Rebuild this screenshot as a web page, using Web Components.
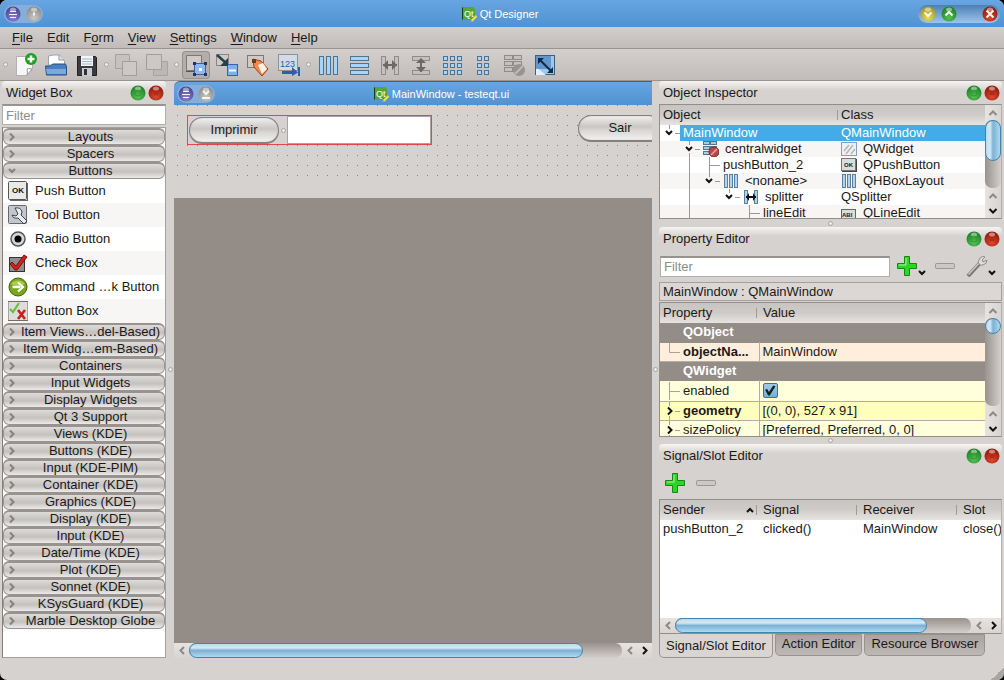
<!DOCTYPE html>
<html lang="en">
<head>
<meta charset="utf-8">
<title>Qt Designer</title>
<style>
  html, body { margin: 0; height: 100%; background: #000; }
  body { font: 13px/16px "Liberation Sans", Arial, sans-serif; color: #1b1918; }
</style>
</head>
<body>
<qd-app></qd-app>
<script>
const svg = (w, h, body, extra = '') =>
  `<svg width="${w}" height="${h}" viewBox="0 0 ${w} ${h}" aria-hidden="true" ${extra}>${body}</svg>`;

const bars = (disabled) => {
  const f = disabled ? '#c4c0bd' : '#a9d4f5', s = disabled ? '#8f8b89' : '#4c7391';
  return { f, s };
};
const bar = (x, y, w, h, f, s) => `<rect x="${x}.5" y="${y}.5" width="${w}" height="${h}" fill="${f}" stroke="${s}"/>`;
const cells = (xs, ys, w, h, f, s) => ys.map(y => xs.map(x => bar(x, y, w, h, f, s)).join('')).join('');
const B = bars(false), D = bars(true);

const ICONS = {
  qt: svg(16, 16, `<path d="M1 1h11l2 2v9l-2 2H1z" fill="#55a636"/><path d="M1 1l1 1v11l-1 1z" fill="#173d10"/><text x="3" y="11" font-size="9" fill="#fff" font-family="Liberation Sans">Qt</text><path d="M10 14l5-5 1 2-5 5z" fill="#f2e34c"/><path d="M9 16l1-2 1 1z" fill="#c9a95f"/>`),
  new: svg(24, 24, `<path d="M3.500 3.500h16v13l-5 6h-11z" fill="#f7f7f7" stroke="#b3b0ae"/><path d="M19 16q-4-1-5 0 1 3 0 6z" fill="#fff" stroke="#999"/><circle cx="18" cy="6" r="6" fill="#1f9e20"/><path d="M18 2.500v7M14.500 6h7" stroke="#fff" stroke-width="2.500"/>`),
  open: svg(24, 24, `<path d="M4.500 12V3l5-1h6l5 6v5z" fill="#fff" stroke="#9ba3ab"/><path d="M15 2v5h5" fill="#dde3e9" stroke="#8f99a5"/><path d="M1.500 13h5l2-2h13l1 3v8h-20z" fill="#4b7fc0" stroke="#244f86"/><path d="M2 16h20v5H3z" fill="#7aa9df"/>`),
  save: svg(24, 24, `<path d="M2.500 3.500h18l1 1v18h-19z" fill="#3c3c40" stroke="#222"/><rect x="6" y="3" width="12" height="10" fill="#f3f6f9"/><path d="M7 6h10M7 8.500h10M7 11h10" stroke="#9fb7cc"/><rect x="7" y="15" width="10" height="8" fill="#c9ccd0"/><rect x="9" y="16" width="3" height="6" fill="#333"/>`),
  front: svg(24, 24, `<path d="M1.500 1.500h14v14h-14z" fill="#c5c1be" stroke="#a5a19e"/><path d="M8.500 8.500h14v14h-14z" fill="#ccc8c5" stroke="#a19d9a"/>`),
  back: svg(24, 24, `<path d="M8.500 8.500h14v14h-14z" fill="#bbb7b4" stroke="#a7a3a0"/><path d="M1.500 1.500h15v15h-15z" fill="#ccc8c5" stroke="#a19d9a"/>`),
  widgets: svg(24, 24, `<path d="M2.500 2.500h15v15h-15z" fill="#cfcac6" stroke="#7b7876"/><path d="M2 18.500h10" stroke="#555"/><rect x="10.500" y="10.500" width="11" height="11" fill="#8fb8f0" stroke="#3c5f9d"/><g fill="#1d3560"><path d="M9 9h3v3H9zM20 9h3v3h-3zM9 20h3v3H9zM20 20h3v3h-3z"/></g><rect x="15" y="15" width="3" height="3" fill="#fff"/>`),
  signals: svg(24, 24, `<rect x="1.500" y="1.500" width="12" height="11" fill="#cfcac6" stroke="#8a8683"/><rect x="12.500" y="11.500" width="10" height="11" fill="#84aeea" stroke="#3562ad"/><path d="M14 17.500h7" stroke="#fff" stroke-width="2"/><path d="M2 2l9 8" stroke="#253f4c" stroke-width="2.500"/><path d="M13 5v8H5z" fill="#253f4c"/>`),
  buddies: svg(24, 24, `<rect x="1.500" y="2.500" width="16" height="12" fill="#cfcac6" stroke="#7b7876"/><path d="M7 6l8 2 7 8-6 7-8-9z" fill="#f08a55" stroke="#a0400d"/><path d="M12 12l5-2 4 6-5 5z" fill="#fff0e6"/><path d="M6 6h4v4H6z" fill="#6b3a20"/>`),
  taborder: svg(24, 24, `<rect x="1.500" y="1.500" width="19" height="16" fill="#d3dbe4" stroke="#8c9299"/><text x="3" y="14" font-size="9" fill="#2f5ea8" font-family="Liberation Sans">123</text><path d="M5 19.500h13" stroke="#2f5ea8" stroke-width="3"/><path d="M15 14l6 5.500-6 3.500zM21 14h2v9h-2z" fill="#2f5ea8"/>`),
  hbox: svg(24, 24, [3, 10, 17].map(x => bar(x, 3, 4, 18, B.f, B.s)).join('')),
  vbox: svg(24, 24, [3, 10, 17].map(y => bar(3, y, 18, 4, B.f, B.s)).join('')),
  hsplit: svg(24, 24, bar(3, 3, 4, 18, D.f, D.s) + bar(16, 3, 4, 18, D.f, D.s) + `<path d="M5 12h14" stroke="#6b6866" stroke-width="2"/><path d="M10 7v10l-5-5zM14 7v10l5-5z" fill="#6b6866"/>`),
  vsplit: svg(24, 24, bar(3, 3, 17, 4, D.f, D.s) + bar(3, 17, 17, 4, D.f, D.s) + `<path d="M12 6v13" stroke="#6b6866" stroke-width="2"/><path d="M7 10h10l-5-5zM7 14h10l-5 5z" fill="#6b6866"/>`),
  grid: svg(24, 24, cells([3, 10, 17], [3, 10, 17], 4, 4, B.f, B.s)),
  form: svg(24, 24, cells([6, 13], [3, 10, 17], 4, 4, B.f, B.s)),
  break: svg(24, 24, cells([2, 11], [2, 8, 14], 8, 4, D.f, D.s) + `<circle cx="17" cy="17" r="6" fill="#979391"/><path d="M13 21l8-8" stroke="#bdb9b6" stroke-width="2"/>`),
  adjust: svg(24, 24, `<rect x="2.500" y="2.500" width="19" height="19" fill="#9cc8ee" stroke="#3c5f80"/><path d="M3 14l10 8H3z" fill="#e3f0fb"/><rect x="3" y="3" width="15" height="13" fill="#5489c4" opacity=".8"/><path d="M7 7l11 11" stroke="#0e2c47" stroke-width="2"/><path d="M5 5h6l-6 6zM20 20h-6l6-6z" fill="#0e2c47"/>`),
  push: svg(20, 20, `<rect x=".5" y=".5" width="18" height="18" rx="1" fill="#e9e9e9" stroke="#555"/><path d="M2 19.500h18M19.500 2v18" stroke="#666"/><text x="4" y="12" font-size="8" font-weight="bold" fill="#111" font-family="Liberation Sans">OK</text>`),
  tool: svg(20, 20, `<rect x=".5" y=".5" width="18" height="18" rx="1" fill="#c3c6cb" stroke="#666a70"/><path d="M7 3q6-1 7 4l-1 3 6 6-3 3-6-6q-5 1-6-3l4 1 2-2z" fill="#e9edf2" stroke="#3c4148"/>`),
  radio: svg(20, 20, `<circle cx="10" cy="10" r="7" fill="#d6d6d6" stroke="#555" stroke-width="1.500"/><circle cx="10" cy="10" r="3.500" fill="#000"/>`),
  check: svg(20, 20, `<rect x="1.500" y="4.500" width="15" height="14" fill="#8d8d8d" stroke="#333"/><path d="M4 9l4 4 8-11 3 2-10 13H7l-5-6z" fill="#d0201c" stroke="#7d0f0c"/>`),
  command: svg(20, 20, `<circle cx="10" cy="10" r="9" fill="#7aa51c" stroke="#40600b"/><path d="M3 7a8 7 0 0 1 14 0q-7 4-14 0z" fill="#a8cc4c"/><path d="M4.500 10h8" stroke="#fff" stroke-width="2.500"/><path d="M10 5.500l5 4.500-5 4.500" fill="none" stroke="#fff" stroke-width="2.200"/>`),
  bbox: svg(20, 20, `<rect x="0" y=".5" width="20" height="19" fill="#dedddc" stroke="#6f6c6a"/><path d="M2 8l3 3 6-9" fill="none" stroke="#67bf3c" stroke-width="2.200"/><path d="M10 9l7 9M17 9l-7 9" stroke="#c8211b" stroke-width="2.600"/>`),
  broken: svg(16, 16, cells([0, 7], [0, 5, 10], 6, 3, '#a9cbe4', '#55758f') + `<circle cx="11" cy="11" r="5" fill="#b8494b" stroke="#7c2528"/><path d="M8 14l6-6" stroke="#e2a6a6" stroke-width="1.500"/>`),
  wid: svg(16, 16, `<rect x=".5" y="1.500" width="15" height="13" fill="#eef1f4" stroke="#7fa0c8"/><path d="M3 10l5-6M5 13l7-9M10 13l4-5" stroke="#b6b8a8" stroke-width="1.500"/>`),
  okbtn: svg(16, 16, `<rect x=".5" y="1.500" width="14" height="12" fill="#dcdcdc" stroke="#777"/><path d="M1 14.500h15M15.500 2v13" stroke="#444"/><text x="3" y="10" font-size="6" font-weight="bold" fill="#222" font-family="Liberation Sans">OK</text>`),
  hb: svg(16, 16, [1, 6, 11].map(x => bar(x, 1, 3, 13, '#b5d4ec', '#58809f')).join('')),
  sp: svg(16, 16, bar(1, 1, 3, 13, '#b5d4ec', '#58809f') + bar(11, 1, 3, 13, '#b5d4ec', '#58809f') + `<path d="M3 8h10" stroke="#111" stroke-width="2"/><path d="M6 4v8L3 8zM10 4v8l3-4z" fill="#111"/>`),
  le: svg(16, 16, `<rect x=".5" y="4.500" width="14" height="9" fill="#dcdcdc" stroke="#666"/><text x="1" y="12" font-size="6" font-weight="bold" fill="#222" font-family="Liberation Sans">ABI</text>`),
  plus: svg(22, 22, `<path d="M8.500 1.500h5v7h7v5h-7v7h-5v-7h-7v-5h7z" fill="#2fd42a" stroke="#128a12"/><path d="M10 3v7H3" fill="none" stroke="#a5f59f"/>`),
  minus: svg(22, 22, `<rect x="1.500" y="8.500" width="19" height="5" rx="1" fill="#cbc8c5" stroke="#9a9795"/>`),
  wrench: svg(22, 22, `<path d="M2 21L14 8" stroke="#777" stroke-width="4"/><path d="M2.500 19.500L14 7" stroke="#c9c9c9" stroke-width="1.500"/><path d="M14 3q3-3 5-1l-3 3 1 2 4-2q0 4-4 5h-3l-2-3z" fill="#dedede" stroke="#8d8d8d"/>`),
  down: svg(10, 8, `<path d="M2 2l3 3 3-3" fill="none" stroke="#111" stroke-width="2"/>`),
  up: svg(10, 8, `<path d="M2 6l3-3 3 3" fill="none" stroke="#111" stroke-width="2"/>`),
};

const BASE = `*{box-sizing:border-box}:host{display:block;min-width:0;min-height:0}
button{font:inherit;color:inherit;border:0;background:none;padding:0;margin:0}svg{display:block;flex:none}
table{border-collapse:collapse;border-spacing:0;width:100%;table-layout:fixed}td,th{padding:0;text-align:left;font-weight:inherit;white-space:nowrap;overflow:hidden}`;

function define(name, render) {
  customElements.define(name, class extends HTMLElement {
    connectedCallback() {
      if (this.shadowRoot) return;
      const t = document.createElement('template');
      const [css, html] = render(this);
      t.innerHTML = `<style>${BASE}${css}</style>${html}`;
      this.attachShadow({ mode: 'open' }).append(t.content.cloneNode(true));
    }
  });
}

/* Round glossy button: colour plus an optional white glyph */
define('qd-orb', el => {
  const tone = {
    green: ['#54c153', '#1f7f28'], red: ['#e0482c', '#8d1a0d'], yellow: ['#e6dc5c', '#a39a2a'],
    violet: ['#8d83cf', '#4b4494'], grey: ['#c9c8c4', '#8d8c89'],
  }[el.getAttribute('tone')];
  const glyph = {
    down: '<path d="M4.500 6.500l3.500 3.500 3.500-3.500"/>', up: '<path d="M4.500 9.500L8 6l3.500 3.500"/>',
    x: '<path d="M4.500 4.500l7 7M11.500 4.500l-7 7"/>', menu: '<path d="M5 5.500h6M4 8.500h8M5 11.500h6" stroke-width="1"/>',
    dot: '<path d="M7 8h2" stroke-width="3"/>', shade: '<path d="M5 5l3 3 3-3M4 12h8"/>',
    ring: '<circle cx="8" cy="8" r="3" stroke="#2f9a38" stroke-width="1"/>', cross: '<path d="M6 6l4 4M10 6l-4 4" stroke="#b02a17"/>',
  }[el.getAttribute('glyph')] || '';
  return [`:host{flex:none}button{display:block;width:16px;height:16px}`,
    `<button type="button" aria-label="${el.getAttribute('label')}">${svg(16, 16,
      `<defs><radialGradient id="g" cx=".5" cy=".75" r=".7"><stop offset="0" stop-color="${tone[0]}"/><stop offset="1" stop-color="${tone[1]}"/></radialGradient></defs><circle cx="8" cy="8" r="7.500" fill="url(#g)"/><ellipse cx="8" cy="3.500" rx="3" ry="2" fill="#fff" opacity=".45"/><g fill="none" stroke="#f4f6f4" stroke-width="2">${glyph}</g>`)}</button>`];
});

define('qd-title', () => [
  `:host{display:grid;grid-template-columns:100px 1fr 100px;align-items:center;height:27px;padding:0 4px;background:linear-gradient(#68a5e2,#5092d1)}
   .pill{display:flex;align-items:center;height:18px;border-radius:9px;width:max-content;padding:0 1px;gap:5px;background:linear-gradient(#4d7fb4,#9cc5ee)}
   .left{background:#86aedb}.right{justify-self:end;padding:0 2px}.gap{width:15px}
   .name{display:flex;gap:3px;align-items:center;justify-content:center;padding-right:5px;color:#fff;font-size:11px}`,
  `<div class="pill left"><qd-orb tone="violet" glyph="menu" label="Window menu"></qd-orb><qd-orb tone="grey" glyph="dot" label="All desktops"></qd-orb></div>
   <div class="name">${ICONS.qt}<span>Qt Designer</span></div>
   <div class="pill right"><qd-orb tone="yellow" glyph="down" label="Minimize"></qd-orb><qd-orb tone="green" glyph="up" label="Maximize"></qd-orb><span class="gap"></span><qd-orb tone="red" glyph="x" label="Close"></qd-orb></div>`]);

define('qd-menu', () => [
  `:host{display:flex;height:22px;padding:0 5px;background:linear-gradient(#d3cfcc,#c1bcb9);border-bottom:1px solid #999492}
   button{padding:0 7px}u{text-underline-offset:2px}`,
  ['<u>F</u>ile', 'Edit', 'F<u>o</u>rm', '<u>V</u>iew', '<u>S</u>ettings', '<u>W</u>indow', '<u>H</u>elp']
    .map(t => `<button type="button">${t}</button>`).join('')]);

define('qd-tools', () => {
  const list = [0, ['new', 'New'], ['open', 'Open'], ['save', 'Save'], 0, ['front', 'Bring to front'], ['back', 'Send to back'], 0,
    ['widgets', 'Edit widgets'], ['signals', 'Edit signals'], ['buddies', 'Edit buddies'], ['taborder', 'Edit tab order'], 0,
    ['hbox', 'Lay out horizontally'], ['vbox', 'Lay out vertically'], ['hsplit', 'Horizontal splitter'], ['vsplit', 'Vertical splitter'],
    ['grid', 'Grid layout'], ['form', 'Form layout'], ['break', 'Break layout'], ['adjust', 'Adjust size']];
  return [`:host{display:flex;align-items:center;gap:3px;height:32px;padding:0 3px;background:linear-gradient(#d3cfcc,#c1bcb9);border-bottom:1px solid #999492}
    i{width:5px;height:5px;border-radius:50%;background:#efedeb;border:1px solid #a8a4a1;flex:none}
    button{width:28px;height:28px;padding:2px;border-radius:4px}.on{background:#b3aeab;box-shadow:inset 0 0 0 1px #96918e}`,
    list.map(i => i ? `<button type="button" aria-label="${i[1]}" ${i[0] === 'widgets' ? 'class="on" aria-pressed="true"' : ''}>${ICONS[i[0]]}</button>` : '<i></i>').join('')];
});

define('qd-grip', el => [
  `:host{display:grid;place-items:center}i{width:5px;height:5px;border-radius:50%;background:#efedeb;border:1px solid #a8a4a1}`, '<i></i>']);

/* Scroll bar; --span sets the length of the handle within the groove */
define('qd-scroll', el => {
  const v = el.hasAttribute('vertical');
  const a = (d, c) => svg(v ? 16 : 12, v ? 12 : 15, `<path d="${d}" fill="none" stroke="${c}" stroke-width="2"/>`);
  const up = v ? 'M4.500 8L8 4.500 11.500 8' : 'M8 4L4.500 7.500 8 11', dn = v ? 'M4.500 4L8 7.500 11.500 4' : 'M4 4l3.500 3.500L4 11';
  return [`:host{display:flex;flex:none;flex-direction:${v ? 'column' : 'row'};align-items:stretch;${v ? 'width:16px' : 'height:15px'};background:linear-gradient(${v ? '90deg' : '180deg'},#e6e3e1,#d8d4d1)}
    .groove{flex:1;min-width:0;min-height:0;display:flex;flex-direction:inherit;border-radius:7px;background:linear-gradient(${v ? '90deg' : '180deg'},#99928e,#d3cfcc)}
    .handle{flex:0 0 var(--span);border:1px solid #4384ad;border-radius:8px;background:linear-gradient(${v ? '90deg' : '180deg'},#b8dcf1 0,#d3e8f4 30%,#7db1d3 50%,#aedaf3 100%)}
    button{display:grid;place-items:center;flex:0 0 15px}`,
    `<button type="button" aria-label="Back">${a(up, '#8d8986')}</button><div class="groove"><div class="handle"></div></div>
     <button type="button" aria-label="Back">${a(up, '#8d8986')}</button><button type="button" aria-label="Forward">${a(dn, '#111')}</button>`];
});

define('qd-dock', el => [
  `:host{display:flex;flex-direction:column}
   header{display:flex;align-items:center;gap:2px;flex:none;height:23px;padding:0 2px 0 4px;border-radius:4px 4px 0 0;background:linear-gradient(#f6f5f4,#d6d2cf 9px)}
   h2{flex:1;margin:0;font:inherit}.body{flex:1;min-height:0;display:flex;flex-direction:column}`,
  `<header><h2>${el.getAttribute('heading')}</h2><qd-orb tone="green" glyph="ring" label="Float"></qd-orb><qd-orb tone="red" glyph="cross" label="Close"></qd-orb></header><div class="body"><slot></slot></div>`]);

define('qd-filter', () => [
  `:host{display:block}input{display:block;width:100%;height:21px;font:inherit;padding:0 3px;border:1px solid #b3afac;border-top:2px solid #98938f;border-radius:0;background:#fff;outline:0}input::placeholder{color:#8f8c8a;opacity:1}`,
  `<input type="text" placeholder="Filter" aria-label="Filter">`]);

define('qd-widgets', () => {
  const head = (t, open) => `<button type="button" class="head" aria-expanded="${!!open}">${svg(12, 12, `<path d="${open ? 'M3 4l3 3 3-3' : 'M4 2.500L7.500 6 4 9.500'}" fill="none" stroke="#85817e" stroke-width="2"/>`)}<span>${t}</span></button>`;
  const item = (i, t) => `<li>${ICONS[i]}<span>${t}</span></li>`;
  return [`:host{display:flex;flex-direction:column;flex:1}
    .frame{flex:1;min-height:0;overflow:hidden;margin-top:2px;background:#fff;border:1px solid #a5a09d;border-left-color:#857f7b}
    .head{display:flex;align-items:center;width:100%;height:17px;padding:0 1px 0 2px;border:1px solid #98938f;border-top-width:2px;border-radius:6px;background:linear-gradient(#dedcda,#c4c1be 55%,#eceae9)}
    .head span{flex:1;text-align:center;white-space:nowrap;line-height:14px}
    ul{list-style:none;margin:0;padding:0}li{display:flex;align-items:center;height:24px;gap:7px;padding-left:5px;white-space:nowrap}li:nth-child(even){background:#f7f6f5}`,
    `<qd-filter></qd-filter><div class="frame">${head('Layouts')}${head('Spacers')}${head('Buttons', 1)}<ul>${item('push', 'Push Button')}${item('tool', 'Tool Button')}${item('radio', 'Radio Button')}${item('check', 'Check Box')}${item('command', 'Command …k Button')}${item('bbox', 'Button Box')}</ul>${
      ['Item Views…del-Based)', 'Item Widg…em-Based)', 'Containers', 'Input Widgets', 'Display Widgets', 'Qt 3 Support', 'Views (KDE)', 'Buttons (KDE)', 'Input (KDE-PIM)', 'Container (KDE)', 'Graphics (KDE)', 'Display (KDE)', 'Input (KDE)', 'Date/Time (KDE)', 'Plot (KDE)', 'Sonnet (KDE)', 'KSysGuard (KDE)', 'Marble Desktop Globe'].map(t => head(t)).join('')}</div>`];
});

define('qd-form', () => [
  `:host{display:flex;flex-direction:column;overflow:hidden}
   .bar{display:grid;grid-template-columns:48px 1fr;align-items:center;flex:none;height:24px;padding-left:3px;border-top:1px solid #41637f;border-radius:6px 0 0;background:linear-gradient(#68a5e2,#5092d1)}
   .pill{display:flex;gap:4px;padding:0 1px;height:18px;align-items:center;width:max-content;border-radius:9px;background:#86aedb}
   .name{display:flex;gap:3px;align-items:center;justify-content:center;padding-left:5px;color:#fff;font-size:11px}
   .canvas{flex:none;height:93px;background:#d6d2cf;overflow:hidden}
   .dots{display:flex;align-items:flex-start;height:71px;padding:10px 0 0 13px;background:conic-gradient(from 270deg at 1px 1px,#86817d 90deg,transparent 0) 3px 0/10px 10px}
   .group{display:flex;align-items:center;flex:none;height:30px;border:1px solid #e2484c;background:#d6d2cf}
   .push{border:1px solid #86817d;border-width:1px 1px 2px;border-radius:13px;height:27px;background:linear-gradient(#f1f0ef 0,#c9c6c3 45%,#d9d6d4 60%,#f3f2f1);box-shadow:inset 0 0 1px #86817d}
   .print{width:90px;margin-left:1px}.exit{width:84px;margin:0 -10px 0 auto;flex:none}
   qd-grip{width:8px}
   input{width:144px;height:28px;font:inherit;padding:0 4px;border:1px solid #a9a4a1;background:#fff;outline:0;border-radius:0}
   .mdi{flex:1;background:#948c87;min-height:0}`,
  `<div class="bar"><div class="pill"><qd-orb tone="violet" glyph="menu" label="Window menu"></qd-orb><qd-orb tone="grey" glyph="shade" label="Shade"></qd-orb></div><div class="name">${ICONS.qt}<span>MainWindow - testeqt.ui</span></div></div>
   <div class="canvas"><div class="dots"><div class="group"><button type="button" class="push print">Imprimir</button><qd-grip></qd-grip><input type="text" aria-label="lineEdit"></div><button type="button" class="push exit">Sair</button></div></div>
   <div class="mdi"></div><qd-scroll style="--span:91%"></qd-scroll>`]);

/* Shared header cells: the divider sits just inside the right edge of each column */
const HEAD = `th{height:20px;background:linear-gradient(#c8c4c1,#cfcbc8 50%,#e6e4e2);padding:0 0 0 4px}
 th:first-child{padding-left:3px}
 th:not(:last-child){background:linear-gradient(#9f9a97,#9f9a97) right 2px center/1px 10px no-repeat,linear-gradient(#c8c4c1,#cfcbc8 50%,#e6e4e2)}
 .box{display:flex;flex:1;min-height:0;overflow:hidden;border:1px solid #938e8a;border-right-color:#b5b0ad;background:#fff}.view{flex:1;min-width:0;overflow:hidden}`;

define('qd-objects', () => {
  const L = 'stroke="#9c9896" fill="none"';
  const arrow = x => `<path d="M${x - 3} 6l3 3 3-3" fill="none" stroke="#111" stroke-width="2"/>`;
  const rows = [
    ['', 'MainWindow', '', 'QMainWindow', svg(20, 16, arrow(9) + `<path d="M9.500 0v4M15 8.500h5" ${L}/>`)],
    ['broken', 'centralwidget', 'wid', 'QWidget', svg(40, 16, arrow(29) + `<path d="M29.500 0v4M29.500 12v4M35 8.500h5" ${L}/>`)],
    ['', 'pushButton_2', 'okbtn', 'QPushButton', svg(60, 16, `<path d="M29.500 0v16M49.500 0v16M49.500 8.500H60" ${L}/>`)],
    ['hb', '&lt;noname&gt;', 'hb', 'QHBoxLayout', svg(60, 16, arrow(49) + `<path d="M29.500 0v16M49.500 0v4M55 8.500h5" ${L}/>`)],
    ['sp', 'splitter', '', 'QSplitter', svg(80, 16, arrow(69) + `<path d="M29.500 0v16M69.500 0v4M75 8.500h5" ${L}/>`)],
    ['', 'lineEdit', 'le', 'QLineEdit', svg(100, 16, `<path d="M29.500 0v16M89.500 0v16M89.500 8.500H100" ${L}/>`)],
  ];
  return [`:host{display:flex;flex:1}${HEAD}th+th{padding-left:1px}td{height:16px}.c{display:flex;align-items:center;height:16px}.c span{padding-left:3px}.c .ic{padding:0 3px}
    td+td .c{padding-left:1px}td+td .c svg{margin-right:3px}td+td .c span{padding-left:0}td+td .c svg+span{padding-left:3px}
    tbody tr:nth-child(even){background:#f7f6f5}.sel td+td,.sel .c span{background:#43ace8;color:#fff}.sel td:first-child span{flex:1}`,
    `<div class="box"><div class="view"><table><colgroup><col style="width:180px"><col></colgroup><thead><tr><th>Object</th><th>Class</th></tr></thead><tbody>${
      rows.map((r, i) => `<tr class="${i ? '' : 'sel'}"><td><div class="c">${r[4]}${r[0] ? `<i class="ic">${ICONS[r[0]]}</i>` : ''}<span>${r[1]}</span></div></td><td><div class="c">${r[2] ? ICONS[r[2]] : ''}<span>${r[3]}</span></div></td></tr>`).join('')
    }</tbody></table></div><qd-scroll vertical style="--span:61%"></qd-scroll></div>`];
});

define('qd-props', () => {
  const line = (d) => svg(20, 18, `<path d="${d}" stroke="#a8a39a" fill="none"/>`);
  const exp = svg(20, 18, `<path d="M9.500 0v4M9.500 14v4M15 9.500h5" stroke="#a8a39a"/><path d="M8 5.500L11.500 9 8 12.500" fill="none" stroke="#111" stroke-width="2"/>`);
  return [`:host{display:flex;flex:1;flex-direction:column}${HEAD}
    .tools{display:flex;align-items:center;height:32px;flex:none;padding:0 5px 0 1px}.tools qd-filter{flex:1;margin-right:6px}.tools button{display:flex;align-items:center}.tools button svg+svg{margin:14px 0 0 -1px}.tools .minus{margin:0 10px 0 7px}
    .path{flex:none;height:19px;line-height:17px;padding-left:3px;border:1px solid #a5a09d;background:#dbd7d4;margin-bottom:1px}
    tbody tr{height:19px;border-bottom:1px solid #b3ae9e}.tall{height:21px!important}td+td{border-left:1px solid #b3ae9e;padding-left:3px}
    .c{display:flex;align-items:center;height:18px;gap:3px}.cat{background:#948c87;color:#fff;font-weight:bold;border-color:#948c87!important}.cat td{padding-left:23px}
    .peach{background:#ffeedc}.pale{background:#ffffdc}.yellow{background:#ffffbc}
    input[type=checkbox]{appearance:none;display:block;width:15px;height:15px;margin:0;border:1px solid #3f7193;border-radius:2px;background:linear-gradient(#9fcbe6,#78afd2)}
    input[type=checkbox]::before{content:"";display:block;height:13px;background:#10222d;clip-path:polygon(12% 45%,28% 38%,42% 62%,75% 12%,92% 18%,48% 88%,36% 88%)}`,
    `<div class="tools"><qd-filter></qd-filter><button type="button" aria-label="Add property">${ICONS.plus}${ICONS.down}</button><button type="button" class="minus" aria-label="Remove property">${ICONS.minus}</button><button type="button" aria-label="Configure">${ICONS.wrench}${ICONS.down}</button></div>
     <div class="path">MainWindow : QMainWindow</div>
     <div class="box"><div class="view"><table><colgroup><col style="width:99px"><col></colgroup><thead><tr><th>Property</th><th>Value</th></tr></thead><tbody>
      <tr class="cat"><td colspan="2">QObject</td></tr>
      <tr class="peach"><td><div class="c">${line('M9.500 0v9.500H20')}<b>objectNa...</b></div></td><td>MainWindow</td></tr>
      <tr class="cat"><td colspan="2">QWidget</td></tr>
      <tr class="pale tall"><td><div class="c">${line('M9.500 0v18M9.500 9.500H20')}<label for="en">enabled</label></div></td><td><input type="checkbox" id="en" checked></td></tr>
      <tr class="yellow"><td><div class="c">${exp}<b>geometry</b></div></td><td>[(0, 0), 527 x 91]</td></tr>
      <tr class="pale"><td><div class="c">${exp}<span>sizePolicy</span></div></td><td>[Preferred, Preferred, 0, 0]</td></tr>
     </tbody></table></div><qd-scroll vertical style="--span:16px"></qd-scroll></div>`];
});

define('qd-signals', () => [
  `:host{display:flex;flex:1;flex-direction:column}${HEAD}
   .tools{display:flex;gap:9px;align-items:center;flex:none;height:32px;padding-left:5px}.box{flex-direction:column}
   td{height:17px;padding-left:4px}td:first-child{padding-left:3px}.sort{display:flex;justify-content:space-between;align-items:center;padding-right:4px}
   nav{display:flex;align-items:flex-start;flex:none;height:24px;gap:2px}nav button{height:22px;padding:0 6px 3px;border:1px solid #98938f;border-radius:0 0 5px 5px;background:linear-gradient(#aaa5a2,#bdb8b5);white-space:nowrap}
   nav .on{height:24px;padding:0 6px;background:#d9d5d2;border-top:0}`,
  `<div class="tools"><button type="button" aria-label="Add">${ICONS.plus}</button><button type="button" aria-label="Remove">${ICONS.minus}</button></div>
   <div class="box"><div class="view"><table><colgroup><col style="width:99px"><col style="width:100px"><col style="width:100px"><col></colgroup><thead><tr><th><div class="sort">Sender${ICONS.up}</div></th><th>Signal</th><th>Receiver</th><th>Slot</th></tr></thead>
   <tbody><tr><td>pushButton_2</td><td>clicked()</td><td>MainWindow</td><td>close()</td></tr></tbody></table></div><qd-scroll style="--span:85%"></qd-scroll></div>
   <nav role="tablist"><button type="button" role="tab" aria-selected="true" class="on">Signal/Slot Editor</button><button type="button" role="tab">Action Editor</button><button type="button" role="tab">Resource Browser</button></nav>`]);

define('qd-app', () => [
  `:host{display:flex;flex-direction:column;height:100vh;border-radius:7px;overflow:hidden;background:#d6d2cf}
   qd-title,qd-menu,qd-tools{flex:none}
   main{flex:1;min-height:0;display:grid;grid-template-columns:164px 8px minmax(0,1fr) 7px 343px;padding:0 2px}
   .right{display:grid;grid-template-rows:138fr 8px 210fr 7px 214fr;min-height:0}
   footer{height:22px;flex:none;display:flex;justify-content:flex-end;align-items:flex-end}
   footer i{width:13px;height:13px;background:linear-gradient(135deg,transparent 50%,#aaa5a2 50%)}`,
  `<qd-title></qd-title><qd-menu></qd-menu><qd-tools></qd-tools>
   <main><qd-dock heading="Widget Box"><qd-widgets></qd-widgets></qd-dock><qd-grip></qd-grip><qd-form></qd-form><qd-grip></qd-grip>
    <div class="right"><qd-dock heading="Object Inspector"><qd-objects></qd-objects></qd-dock><qd-grip></qd-grip>
     <qd-dock heading="Property Editor"><qd-props></qd-props></qd-dock><qd-grip></qd-grip>
     <qd-dock heading="Signal/Slot Editor"><qd-signals></qd-signals></qd-dock></div></main>
   <footer><i></i></footer>`]);
</script>
</body>
</html>
